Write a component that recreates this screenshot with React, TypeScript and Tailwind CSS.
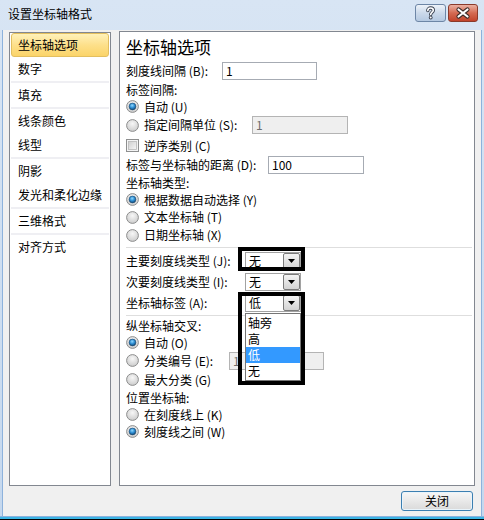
import { useId } from 'react';

function Radio({ checked = false }: { checked?: boolean }) {
  const id = useId();
  return (
    <svg width="13" height="13" viewBox="0 0 13 13" className="flex-shrink-0">
      <defs>
        <radialGradient id={`${id}o`} cx="50%" cy="35%" r="60%">
          <stop offset="0%" stopColor="#f7f7f7" />
          <stop offset="100%" stopColor="#cfcfcf" />
        </radialGradient>
        <radialGradient id={`${id}i`} cx="45%" cy="35%" r="65%">
          <stop offset="0%" stopColor="#8fd8ff" />
          <stop offset="55%" stopColor="#2a8ad0" />
          <stop offset="100%" stopColor="#14466f" />
        </radialGradient>
      </defs>
      <circle cx="6.5" cy="6.5" r="5.9" fill={`url(#${id}o)`} stroke="#8e8f8f" strokeWidth="1" />
      {checked && <circle cx="6.5" cy="6.5" r="3.4" fill={`url(#${id}i)`} stroke="#1b4a72" strokeWidth="0.6" />}
    </svg>
  );
}

function Checkbox() {
  const id = useId();
  return (
    <svg width="13" height="13" viewBox="0 0 13 13" className="flex-shrink-0">
      <defs>
        <linearGradient id={id} x1="0" y1="0" x2="1" y2="1">
          <stop offset="0%" stopColor="#cfcfcf" />
          <stop offset="100%" stopColor="#f7f7f7" />
        </linearGradient>
      </defs>
      <rect x="0.5" y="0.5" width="12" height="12" fill="#f4f4f4" stroke="#8e8f8f" />
      <rect x="2.5" y="2.5" width="8" height="8" fill={`url(#${id})`} stroke="#b9b9b9" strokeWidth="0.8" />
    </svg>
  );
}

function TextBox({ value, width, disabled = false }: { value: string; width: number; disabled?: boolean }) {
  return (
    <div
      className={`h-[18px] border pl-[3px] text-[12px] leading-[16px] ${
        disabled ? 'border-[#b4b4b4] bg-[#efefef] text-[#6d6d6d]' : 'border-[#a6abb3] bg-white text-black'
      }`}
      style={{ width }}
    >
      {value}
    </div>
  );
}

function Arrow() {
  return (
    <svg width="7" height="4" viewBox="0 0 7 4">
      <path d="M0 0H7L3.5 4Z" fill="#000" />
    </svg>
  );
}

function Combo({ value }: { value: string }) {
  return (
    <div className="flex h-[18px] w-[56px] border border-[#a2a2a2] bg-white">
      <span className="flex-1 pl-[3px] text-[12px] leading-[16px]">{value}</span>
      <div className="flex h-[16px] w-[17px] items-center justify-center rounded-[2px] border border-[#7a7a7a] bg-linear-to-b from-[#f4f4f4] to-[#d3d3d3]">
        <Arrow />
      </div>
    </div>
  );
}

function Row({ h, children }: { h: number; children: React.ReactNode }) {
  return (
    <div className="flex items-center whitespace-nowrap" style={{ height: h }}>
      {children}
    </div>
  );
}

function RadioRow({ h, checked, label, labelWidth, children }: { h: number; checked?: boolean; label: string; labelWidth?: number; children?: React.ReactNode }) {
  return (
    <Row h={h}>
      <Radio checked={checked} />
      <span className="ml-[5px]" style={labelWidth ? { width: labelWidth } : undefined}>
        {label}
      </span>
      {children}
    </Row>
  );
}

function Separator({ h }: { h: number }) {
  return (
    <div className="flex items-center" style={{ height: h }}>
      <div className="h-px w-[346px] bg-[#dedede]" />
    </div>
  );
}

const navGroups = [['坐标轴选项', '数字'], ['填充'], ['线条颜色', '线型'], ['阴影', '发光和柔化边缘'], ['三维格式'], ['对齐方式']];

export default function App() {
  return (
    <div className="relative flex h-[520px] w-[484px] flex-col overflow-hidden bg-linear-to-b from-[#d8e5f4] to-[#c5d8ee] font-['Noto_Sans_CJK_SC',sans-serif] text-[12px] text-black">
      {/* title bar */}
      <div className="flex h-[30px] items-start justify-between pl-[8px] pr-[6px]">
        <span className="mt-[5px] text-[12px] leading-[17px]">设置坐标轴格式</span>
        <div className="mt-[4px] flex gap-[2px]">
          <div className="flex h-[18px] w-[31px] items-center justify-center rounded-[3px] border border-[#6d86a6] bg-linear-to-b from-[#eef3f9] via-[#cbd9ea] to-[#b5c9e1]">
            <svg width="29" height="16" viewBox="0 0 29 16">
              <path d="M11.8 5.6C11.8 3.9 13 3 14.6 3C16.2 3 17.3 3.9 17.3 5.3C17.3 7.2 14.7 7.3 14.7 9.6" fill="none" stroke="#3a4150" strokeWidth="3.4" strokeLinecap="round" />
              <circle cx="14.7" cy="12.6" r="1.9" fill="#3a4150" />
              <path d="M11.8 5.6C11.8 3.9 13 3 14.6 3C16.2 3 17.3 3.9 17.3 5.3C17.3 7.2 14.7 7.3 14.7 9.6" fill="none" stroke="#fff" strokeWidth="1.6" strokeLinecap="round" />
              <circle cx="14.7" cy="12.6" r="1" fill="#fff" />
            </svg>
          </div>
          <div className="flex h-[18px] w-[30px] items-center justify-center rounded-[3px] border border-[#8a3a2b] bg-linear-to-b from-[#eab0a2] via-[#d46a52] to-[#c2432b]">
            <svg width="28" height="16" viewBox="0 0 28 16">
              <path d="M9.5 4.5L18.5 11.5M18.5 4.5L9.5 11.5" stroke="#3b2a27" strokeWidth="4.2" strokeLinecap="round" />
              <path d="M9.5 4.5L18.5 11.5M18.5 4.5L9.5 11.5" stroke="#fff" strokeWidth="2.2" strokeLinecap="round" />
            </svg>
          </div>
        </div>
      </div>

      {/* body */}
      <div className="mx-[2px] flex h-[486px] flex-col border-x border-[#8db2dc] bg-[#f0f0f0] pl-[6px] pr-[6px] pt-[1px]">
        <div className="flex h-[455px] gap-[8px]">
          {/* nav */}
          <div className="mt-[1px] flex h-[454px] w-[102px] flex-col border border-[#828790] bg-white">
            {navGroups.map((group, gi) => (
              <div key={gi} className="flex flex-col">
                {group.map((item) => (
                  <div
                    key={item}
                    className={`mx-px flex h-[24px] items-center pl-[6px] text-[12px] ${
                      item === '坐标轴选项'
                        ? 'rounded-[3px] border border-[#e3bf5f] bg-linear-to-b from-[#fff1b9] via-[#fde08a] to-[#fbd469]'
                        : 'border border-transparent'
                    }`}
                  >
                    {item}
                  </div>
                ))}
                {gi < navGroups.length - 1 && <div className="mx-px h-[2px] bg-[#efeff3]" />}
              </div>
            ))}
          </div>

          {/* options */}
          <div className="flex h-[455px] w-[356px] flex-col border border-[#828790] bg-white pl-[6px]">
            <Row h={29}>
              <span className="text-[17px] leading-[22px]">坐标轴选项</span>
            </Row>
            <Row h={20}>
              <span className="w-[96px]">刻度线间隔 (B):</span>
              <TextBox value="1" width={95} />
            </Row>
            <Row h={17}>标签间隔:</Row>
            <RadioRow h={17} checked label="自动 (U)" />
            <RadioRow h={20} label="指定间隔单位 (S):" labelWidth={108}>
              <TextBox value="1" width={96} disabled />
            </RadioRow>
            <Row h={21}>
              <Checkbox />
              <span className="ml-[5px]">逆序类别 (C)</span>
            </Row>
            <Row h={18}>
              <span className="w-[142px]">标签与坐标轴的距离 (D):</span>
              <TextBox value="100" width={96} />
            </Row>
            <Row h={17}>坐标轴类型:</Row>
            <RadioRow h={17} checked label="根据数据自动选择 (Y)" />
            <RadioRow h={18} label="文本坐标轴 (T)" />
            <RadioRow h={18} label="日期坐标轴 (X)" />
            <Separator h={6} />
            <Row h={21}>
              <span className="w-[119px]">主要刻度线类型 (J):</span>
              <Combo value="无" />
            </Row>
            <Row h={21}>
              <span className="w-[119px]">次要刻度线类型 (I):</span>
              <Combo value="无" />
            </Row>
            <Row h={21}>
              <span className="w-[119px]">坐标轴标签 (A):</span>
              <Combo value="低" />
            </Row>
            <Separator h={5} />
            <Row h={16}>纵坐标轴交叉:</Row>
            <RadioRow h={17} checked label="自动 (O)" />
            <RadioRow h={19} label="分类编号 (E):" labelWidth={85}>
              <TextBox value="1" width={95} disabled />
            </RadioRow>
            <RadioRow h={19} label="最大分类 (G)" />
            <Row h={17}>位置坐标轴:</Row>
            <RadioRow h={17} label="在刻度线上 (K)" />
            <RadioRow h={17} checked label="刻度线之间 (W)" />
          </div>
        </div>

        <div className="mt-[5px] flex justify-end pr-[2px]">
          <button
            type="button"
            className="h-[20px] w-[72px] rounded-[3px] border border-[#3c7fb1] bg-linear-to-b from-[#f7f7f7] to-[#dadada] text-[12px] leading-[18px] shadow-[inset_0_0_0_1px_#e9f4fb]"
          >
            关闭
          </button>
        </div>
      </div>
      <div className="h-px bg-[#8db2dc]" />
      <div className="h-[2px] bg-[#3bb4e4]" />
      <div className="h-px bg-black" />

      {/* annotation outlines */}
      <div className="absolute left-[238px] top-[247px] h-[24px] w-[67px] border-4 border-black" />
      <div className="absolute left-[238px] top-[292px] h-[93px] w-[67px] border-4 border-black" />

      {/* open dropdown list */}
      <div className="absolute left-[245px] top-[313px] flex w-[56px] flex-col border border-[#767676] bg-white py-px">
        {['轴旁', '高', '低', '无'].map((opt) => (
          <div
            key={opt}
            className={`h-[16px] pl-[2px] text-[12px] leading-[16px] ${opt === '低' ? 'bg-[#3399ff] text-white' : ''}`}
          >
            {opt}
          </div>
        ))}
      </div>
    </div>
  );
}
